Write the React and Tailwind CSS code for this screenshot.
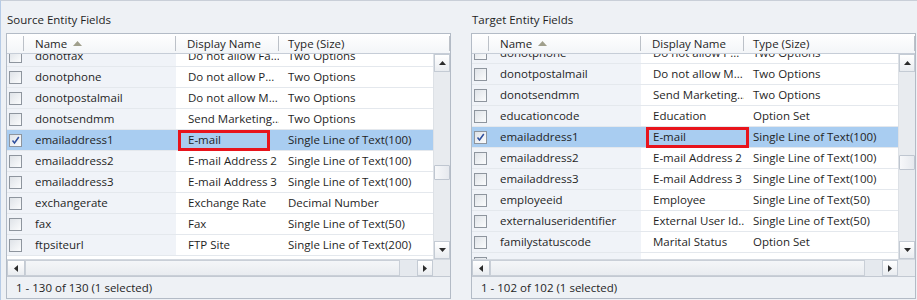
import React from 'react';

const sourceRows = [
  { name: 'donotfax', display: 'Do not allow Fa...', type: 'Two Options' },
  { name: 'donotphone', display: 'Do not allow P...', type: 'Two Options' },
  { name: 'donotpostalmail', display: 'Do not allow M...', type: 'Two Options' },
  { name: 'donotsendmm', display: 'Send Marketing...', type: 'Two Options' },
  { name: 'emailaddress1', display: 'E-mail', type: 'Single Line of Text(100)', selected: true },
  { name: 'emailaddress2', display: 'E-mail Address 2', type: 'Single Line of Text(100)' },
  { name: 'emailaddress3', display: 'E-mail Address 3', type: 'Single Line of Text(100)' },
  { name: 'exchangerate', display: 'Exchange Rate', type: 'Decimal Number' },
  { name: 'fax', display: 'Fax', type: 'Single Line of Text(50)' },
  { name: 'ftpsiteurl', display: 'FTP Site', type: 'Single Line of Text(200)' }
];

const targetRows = [
  { name: 'donotphone', display: 'Do not allow P...', type: 'Two Options' },
  { name: 'donotpostalmail', display: 'Do not allow M...', type: 'Two Options' },
  { name: 'donotsendmm', display: 'Send Marketing...', type: 'Two Options' },
  { name: 'educationcode', display: 'Education', type: 'Option Set' },
  { name: 'emailaddress1', display: 'E-mail', type: 'Single Line of Text(100)', selected: true },
  { name: 'emailaddress2', display: 'E-mail Address 2', type: 'Single Line of Text(100)' },
  { name: 'emailaddress3', display: 'E-mail Address 3', type: 'Single Line of Text(100)' },
  { name: 'employeeid', display: 'Employee', type: 'Single Line of Text(50)' },
  { name: 'externaluseridentifier', display: 'External User Id...', type: 'Single Line of Text(50)' },
  { name: 'familystatuscode', display: 'Marital Status', type: 'Option Set' },
  { name: 'fax', display: 'Fax', type: 'Single Line of Text(50)' }
];

const Arrow = ({ dir }) => {
  const pts = {
    up: '0,4 3.5,0 7,4',
    down: '0,0 7,0 3.5,4',
    left: '4,0 4,7 0,3.5',
    right: '0,0 0,7 4,3.5'
  }[dir];
  const horiz = dir === 'left' || dir === 'right';
  return (
    <svg width={horiz ? 4 : 7} height={horiz ? 7 : 4} viewBox={horiz ? '0 0 4 7' : '0 0 7 4'}>
      <polygon points={pts} fill="#2b2b2b" />
    </svg>
  );
};

const Checkbox = ({ checked }) => (
  <div className="w-[13px] h-[13px] border border-[#8e959e] bg-gradient-to-br from-[#dfe3e8] to-[#fbfcfd] flex items-center justify-center">
    {checked && (
      <svg width="9" height="9" viewBox="0 0 9 9">
        <path d="M1.5 4.5 L3.5 7 L7.8 1" stroke="#2f4f9e" strokeWidth="1.5" fill="none" />
      </svg>
    )}
  </div>
);

const HeaderSep = () => <div className="w-px h-[15px] bg-[#bcc1c8] shrink-0" />;

const Grid = ({ title, rows, offset, redBox, vThumb, footer }) => (
  <div className="flex flex-col w-[445px]">
    <div className="h-[32px] flex items-end pb-[6px] pl-[1px] text-[#1f1f1f]">{title}</div>
    <div className="h-[266px] border border-[#b3bbc6] flex flex-col">
      {/* Header */}
      <div className="h-[20px] border-b border-[#c6cdd7] bg-gradient-to-b from-white to-[#f3f5f8] flex items-center text-[#1f1f1f]">
        <div className="w-[16px] shrink-0" />
        <HeaderSep />
        <div className="w-[151px] shrink-0 pl-[11px] flex items-center gap-[6px]">
          <span>Name</span>
          <svg width="9" height="5" viewBox="0 0 9 5">
            <polygon points="0,5 4.5,0 9,5" fill="#a09f8c" />
          </svg>
        </div>
        <HeaderSep />
        <div className="w-[102px] shrink-0 pl-[11px] whitespace-nowrap">Display Name</div>
        <HeaderSep />
        <div className="flex-1 pl-[9px] whitespace-nowrap">Type (Size)</div>
        <HeaderSep />
      </div>
      {/* Body */}
      <div className="h-[205px] flex">
        <div className="flex-1 overflow-hidden bg-white">
          <div style={{ marginTop: offset }}>
            {rows.map((r) => (
              <div
                key={r.name}
                className={`relative h-[21px] border-b border-[#e4e8ed] flex items-center whitespace-nowrap text-[#1f1f1f] ${r.selected ? 'bg-[#a9cdf1]' : ''}`}
              >
                <div className={`w-[17px] h-full shrink-0 flex items-center pl-[2px] ${r.selected ? '' : 'bg-[#f0f3f8]'}`}>
                  <Checkbox checked={r.selected} />
                </div>
                <div className={`w-[152px] h-full shrink-0 flex items-center pl-[11px] overflow-hidden ${r.selected ? '' : 'bg-[#f0f3f8]'}`}>
                  {r.name}
                </div>
                <div className="w-[103px] h-full shrink-0 flex items-center pl-[12px] overflow-hidden">
                  {r.display}
                </div>
                <div className="flex-1 h-full flex items-center pl-[9px] overflow-hidden">{r.type}</div>
                {r.selected && (
                  <div
                    className="absolute top-0 h-[21px] border-[3px] border-[#e8141c]"
                    style={{ left: 169 + redBox.left, width: redBox.width }}
                  />
                )}
              </div>
            ))}
          </div>
        </div>
        {/* Vertical scrollbar */}
        <div className="w-[17px] shrink-0 bg-[#e8ebef] border-l border-[#dde1e6] flex flex-col">
          <div className="h-[18px] border border-[#c4cbd4] bg-gradient-to-b from-white to-[#e9ecf0] flex items-center justify-center">
            <Arrow dir="up" />
          </div>
          <div style={{ height: vThumb - 70 }} />
          <div className="h-[15px] border border-[#bfc6d0] bg-gradient-to-r from-[#f7f8fa] to-[#e6e9ee] rounded-[1px]" />
          <div className="flex-1" />
          <div className="h-[18px] border border-[#c4cbd4] bg-gradient-to-b from-white to-[#e9ecf0] flex items-center justify-center">
            <Arrow dir="down" />
          </div>
        </div>
      </div>
      {/* Horizontal scrollbar */}
      <div className="h-[17px] flex border-t border-[#d3d8df] bg-[#e5e9ee]">
        <div className="w-[18px] border border-[#c4cbd4] bg-gradient-to-b from-white to-[#e9ecf0] flex items-center justify-center">
          <Arrow dir="left" />
        </div>
        <div className="w-[375px] border border-[#c9cfd7] bg-gradient-to-b from-[#f4f6f8] to-[#e9ecf0]" />
        <div className="flex-1" />
        <div className="w-[16px] border border-[#c4cbd4] bg-gradient-to-b from-white to-[#e9ecf0] flex items-center justify-center">
          <Arrow dir="right" />
        </div>
        <div className="w-[17px] bg-[#e8ebef]" />
      </div>
      {/* Footer */}
      <div className="flex-1 border-t border-[#c3c9d2] flex items-center pl-[9px] text-[#1f1f1f] bg-[#eef1f5]">
        {footer}
      </div>
    </div>
  </div>
);

export default function App() {
  return (
    <div
      className="w-[917px] h-[300px] bg-[#eef1f5] border-t border-l border-t-[#c9cfd8] border-l-[#b6cbe6] pl-[5px] flex gap-[20px] text-[11.5px] leading-[14px] overflow-hidden"
      style={{ fontFamily: '"Segoe UI", "Open Sans", sans-serif' }}
    >
      <Grid
        title="Source Entity Fields"
        rows={sourceRows}
        offset={-8}
        redBox={{ left: 2, width: 92 }}
        vThumb={163}
        footer="1 - 130 of 130 (1 selected)"
      />
      <Grid
        title="Target Entity Fields"
        rows={targetRows}
        offset={-11}
        redBox={{ left: 5, width: 103 }}
        vThumb={153}
        footer="1 - 102 of 102 (1 selected)"
      />
    </div>
  );
}
